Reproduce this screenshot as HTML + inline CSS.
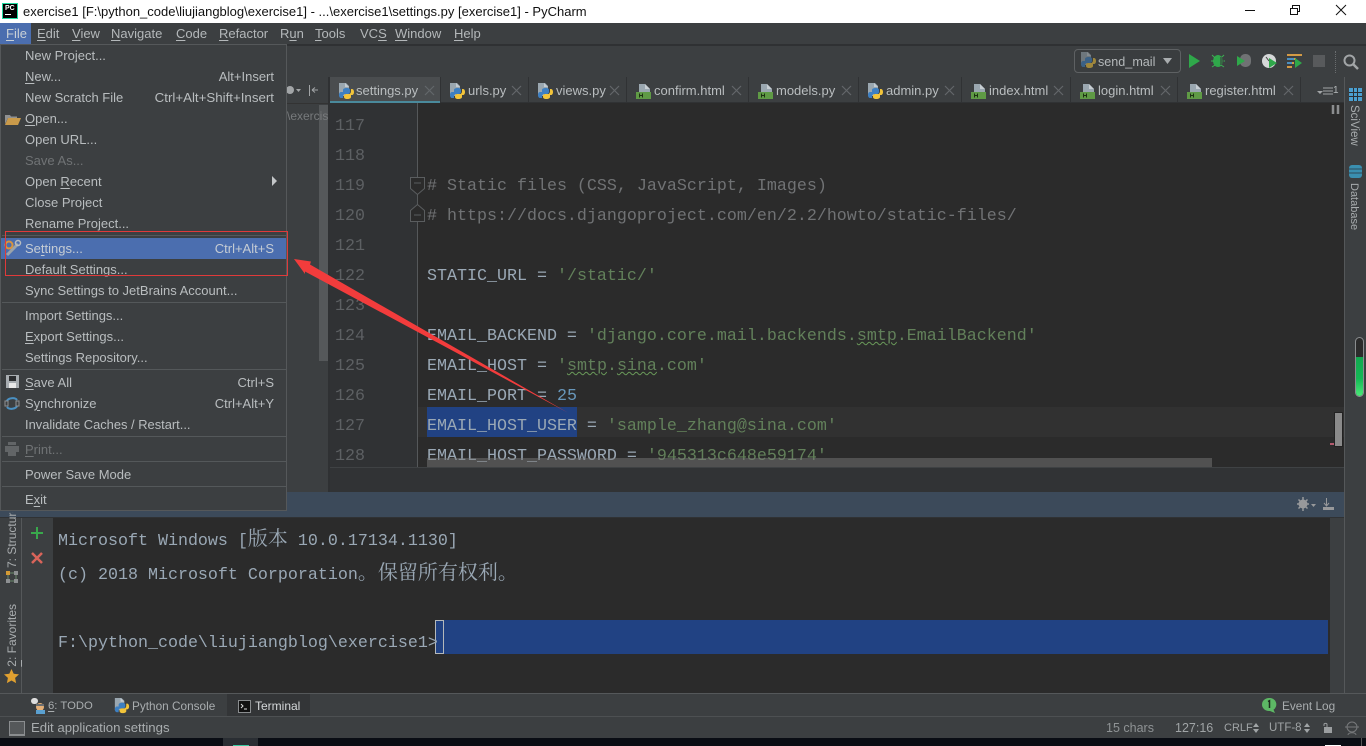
<!DOCTYPE html>
<html><head><meta charset="utf-8"><title>exercise1 - PyCharm</title>
<style>
html,body{margin:0;padding:0;width:1366px;height:746px;overflow:hidden;background:#3c3f41}
body{position:relative;font-family:"Liberation Sans","Noto Sans CJK SC",sans-serif;font-size:13px;color:#b4b8ba}
.a{position:absolute}
.t{position:absolute;white-space:pre;line-height:20px}
.c{position:absolute;white-space:pre;font-family:"Liberation Mono","Noto Serif CJK SC",monospace;font-size:16.67px;line-height:30px;color:#9aa8b5}
.z{font-family:"Noto Serif CJK SC",serif;font-size:20px;line-height:0}
.n{position:absolute;left:335px;font-family:"Liberation Mono",monospace;font-size:16.67px;line-height:30px;color:#5d6063}
.s{color:#62805a}.w{text-decoration:underline wavy #6a9a5a 1px}
.m{position:absolute;left:25px;white-space:pre;line-height:20px;color:#b9bdbf}
.k{position:absolute;right:1092px;white-space:pre;line-height:20px;color:#b9bdbf}
.sep{position:absolute;left:2px;width:284px;height:1px;background:#54585a}
.tab{position:absolute;top:77px;height:26px;border-right:1px solid #303234}
.tab span{position:absolute;top:4px;white-space:pre;line-height:20px;color:#b9bdbf}
.x{position:absolute;top:9px;width:9px;height:9px}
.v{position:absolute;writing-mode:vertical-rl;white-space:pre;line-height:14px;font-size:12px;color:#a9adaf}
.v.r{transform:rotate(180deg)}
u{text-underline-offset:2px}
svg{position:absolute;overflow:visible}
</style></head><body>
<svg width="0" height="0" style="position:absolute"><defs>
<g id="py"><path d="M3 1h7l3 3v5H9v5H3z" fill="#9aa7b0"/><path d="M9 1v4h4" fill="#c3ccd2"/><path d="M11 6c-3 0-4 1-4 2v2H5c-1 0-2 1-2 3s1 3 2 3h2v-2c0-1 1-2 2-2h3c1 0 2-1 2-2V8c0-1-1-2-3-2z" fill="#3d7fc1"/><path d="M11 17c3 0 4-1 4-2v-2h1c1 0 2-1 2-3s-1-3-2-3h-1v2c0 2-1 3-2 3h-3c-1 0-2 1-2 2v1c0 1 1 2 3 2z" fill="#f2c43a"/></g>
<g id="ht"><path d="M3 1h6l5 5v4H3z" fill="#9aa7b0"/><path d="M9 1v5h5" fill="#c7ced3"/><rect x="0" y="9" width="15" height="7" fill="#5f9a45"/><path d="M3.500 10.500v4M6.500 10.500v4M3.500 12.500h3" stroke="#1d3212" fill="none"/></g>
<g id="cl"><path d="M0 0L9 9M9 0L0 9" stroke="#63676a" stroke-width="1.200"/></g>
</defs></svg>

<!-- title bar -->
<div class="a" style="left:0;top:0;width:1366px;height:23px;background:#fff"></div>
<div class="a" style="left:2px;top:3px;width:14px;height:14px;background:#000;border:1px solid #1fd9a0"></div>
<div class="a" style="left:5px;top:4px;font:bold 7px/9px 'Liberation Sans',sans-serif;color:#fff">PC</div>
<div class="a" style="left:5px;top:14px;width:6px;height:1px;background:#fff"></div>
<div class="t" style="left:23px;top:2px;color:#111;font-size:13px">exercise1 [F:\python_code\liujiangblog\exercise1] - ...\exercise1\settings.py [exercise1] - PyCharm</div>
<svg style="left:1240px;top:0" width="120" height="22"><path d="M5 10.500h10" stroke="#111"/><path d="M50.500 8.500h7v6h-7zM52.500 8V5.500h7v6H58" stroke="#111" fill="none"/><path d="M96 5l10 10M106 5L96 15" stroke="#111" fill="none"/></svg>

<!-- menu bar -->
<div class="a" style="left:0;top:23px;width:1366px;height:22px;background:#3c3f41"></div>
<div class="a" style="left:0;top:23px;width:31px;height:22px;background:#4b6eaf"></div>
<div class="t" style="left:6px;top:24px;color:#c9d0d6"><u>F</u>ile</div>
<div class="t" style="left:37px;top:24px"><u>E</u>dit</div>
<div class="t" style="left:72px;top:24px"><u>V</u>iew</div>
<div class="t" style="left:111px;top:24px"><u>N</u>avigate</div>
<div class="t" style="left:176px;top:24px"><u>C</u>ode</div>
<div class="t" style="left:219px;top:24px"><u>R</u>efactor</div>
<div class="t" style="left:280px;top:24px">R<u>u</u>n</div>
<div class="t" style="left:315px;top:24px"><u>T</u>ools</div>
<div class="t" style="left:360px;top:24px">VC<u>S</u></div>
<div class="t" style="left:395px;top:24px"><u>W</u>indow</div>
<div class="t" style="left:454px;top:24px"><u>H</u>elp</div>
<div class="a" style="left:0;top:44px;width:1366px;height:2px;background:#2f3133"></div>

<!-- toolbar -->
<div class="a" style="left:1074px;top:49px;width:105px;height:22px;background:#3a3d3f;border:1px solid #5e6163;border-radius:4px"></div>
<svg style="left:1080px;top:53px;opacity:.55" width="15" height="15"><use href="#py" transform="translate(-2 -2)"/></svg>
<div class="t" style="left:1098px;top:52px;font-size:12.600px">send_mail</div>
<svg style="left:1163px;top:58px" width="10" height="7"><path d="M0 0h9L4.500 6z" fill="#a9adaf"/></svg>
<svg style="left:1188px;top:53px" width="14" height="16"><path d="M1 1l11 7-11 7z" fill="#2fa84a"/></svg>
<svg style="left:1211px;top:53px" width="16" height="16"><ellipse cx="7" cy="8" rx="5" ry="6" fill="#2fa84a"/><path d="M1 2l3 3M13 2l-3 3M0 8h3M14 8h-3M1 14l3-2M13 14l-3-2" stroke="#3cb054"/><path d="M9 4h4v8H9z" fill="#3c3f41" opacity=".6"/></svg>
<svg style="left:1237px;top:53px" width="15" height="16"><rect x="3" y="1" width="11" height="13" rx="5" fill="#9a9d9f" opacity=".55"/><path d="M0 3l8 5-8 5z" fill="#2fa84a"/></svg>
<svg style="left:1262px;top:53px" width="16" height="16"><circle cx="7" cy="8" r="7" fill="#d5d7d8"/><path d="M7 8L4 4" stroke="#444"/><path d="M7 5l8 5-8 5z" fill="#2fa84a"/></svg>
<svg style="left:1287px;top:54px" width="16" height="14"><path d="M0 1h15M0 5h9M0 9h7M0 13h5" stroke="#d39a45" stroke-width="2"/><path d="M0 5h7M0 9h5" stroke="#4a90c2" stroke-width="2"/><path d="M8 4l7 5-7 5z" fill="#2fa84a"/></svg>
<div class="a" style="left:1313px;top:55px;width:12px;height:12px;background:#585a5c"></div>
<div class="a" style="left:1335px;top:51px;width:1px;height:22px;border-left:1px dotted #6a6d6f"></div>
<svg style="left:1343px;top:54px" width="16" height="16"><circle cx="6.500" cy="6.500" r="5" stroke="#a2a5a7" stroke-width="2" fill="none"/><path d="M10 10l5 5" stroke="#a2a5a7" stroke-width="2.500"/></svg>

<!-- project panel remnants -->
<div class="a" style="left:287px;top:77px;width:42px;height:390px;background:#3c3f41"></div>
<div class="a" style="left:287px;top:103px;width:42px;height:1px;background:#333"></div>
<svg style="left:288px;top:84px" width="32" height="14"><circle cx="2" cy="6" r="4" fill="#a2a5a7"/><path d="M8 5h5l-2.500 3z" fill="#a2a5a7"/><path d="M21.500 1v11M24 6h6M24 6l3-2.500M24 6l3 2.500" stroke="#a2a5a7" fill="none"/></svg>
<div class="a" style="left:319px;top:105px;width:9px;height:256px;background:#55585a"></div>
<div class="t" style="left:287px;top:106px;width:41px;overflow:hidden;color:#777a7c;font-size:12px">\exercis</div>
<div class="a" style="left:328px;top:77px;width:2px;height:415px;background:#2f3133"></div>

<!-- tabs -->
<div class="a" style="left:330px;top:77px;width:1014px;height:26px;background:#3c3f41"></div>
<div class="a" style="left:330px;top:77px;width:110px;height:24px;background:#4a4d4f"></div>
<div class="a" style="left:330px;top:101px;width:110px;height:2px;background:#4a8a9c"></div>
<div class="a" style="left:440px;top:102px;width:904px;height:1px;background:#303234"></div>
<div class="tab" style="left:330px;width:110px"><svg style="left:6px;top:5px" width="18" height="18"><use href="#py"/></svg><span style="left:26px">settings.py</span><svg class="x" style="left:95px"><use href="#cl"/></svg></div>
<div class="tab" style="left:441px;width:87px"><svg style="left:6px;top:5px" width="18" height="18"><use href="#py"/></svg><span style="left:27px">urls.py</span><svg class="x" style="left:71px"><use href="#cl"/></svg></div>
<div class="tab" style="left:529px;width:97px"><svg style="left:6px;top:5px" width="18" height="18"><use href="#py"/></svg><span style="left:27px">views.py</span><svg class="x" style="left:81px"><use href="#cl"/></svg></div>
<div class="tab" style="left:627px;width:121px"><svg style="left:9px;top:6px" width="16" height="17"><use href="#ht"/></svg><span style="left:27px">confirm.html</span><svg class="x" style="left:105px"><use href="#cl"/></svg></div>
<div class="tab" style="left:749px;width:109px"><svg style="left:9px;top:6px" width="16" height="17"><use href="#ht"/></svg><span style="left:27px">models.py</span><svg class="x" style="left:93px"><use href="#cl"/></svg></div>
<div class="tab" style="left:859px;width:102px"><svg style="left:6px;top:5px" width="18" height="18"><use href="#py"/></svg><span style="left:27px">admin.py</span><svg class="x" style="left:86px"><use href="#cl"/></svg></div>
<div class="tab" style="left:962px;width:108px"><svg style="left:9px;top:6px" width="16" height="17"><use href="#ht"/></svg><span style="left:27px">index.html</span><svg class="x" style="left:92px"><use href="#cl"/></svg></div>
<div class="tab" style="left:1071px;width:106px"><svg style="left:9px;top:6px" width="16" height="17"><use href="#ht"/></svg><span style="left:27px">login.html</span><svg class="x" style="left:90px"><use href="#cl"/></svg></div>
<div class="tab" style="left:1178px;width:122px"><svg style="left:9px;top:6px" width="16" height="17"><use href="#ht"/></svg><span style="left:27px">register.html</span><svg class="x" style="left:106px"><use href="#cl"/></svg></div>
<svg style="left:1317px;top:86px" width="24" height="11"><path d="M0 5h6L3 8z" fill="#a2a5a7"/><path d="M6 2h10M6 5h10M6 8h10" stroke="#a2a5a7"/></svg>
<div class="t" style="left:1333px;top:81px;font-size:10px">1</div>

<!-- editor -->
<div class="a" style="left:330px;top:103px;width:1014px;height:364px;background:#2b2b2b"></div>
<div class="a" style="left:330px;top:103px;width:87px;height:364px;background:#303234"></div>
<div class="a" style="left:418px;top:407px;width:926px;height:30px;background:#313131"></div>
<div class="a" style="left:417px;top:103px;width:1px;height:364px;background:#55585a"></div>
<div class="a" style="left:427px;top:407px;width:150px;height:30px;background:#214283"></div>
<div class="a" style="left:330px;top:103px;width:1014px;height:364px;overflow:hidden">
<div class="n" style="left:5px;top:9px">117</div>
<div class="n" style="left:5px;top:39px">118</div>
<div class="n" style="left:5px;top:69px">119</div>
<div class="n" style="left:5px;top:99px">120</div>
<div class="n" style="left:5px;top:129px">121</div>
<div class="n" style="left:5px;top:159px">122</div>
<div class="n" style="left:5px;top:189px">123</div>
<div class="n" style="left:5px;top:219px">124</div>
<div class="n" style="left:5px;top:249px">125</div>
<div class="n" style="left:5px;top:279px">126</div>
<div class="n" style="left:5px;top:309px">127</div>
<div class="n" style="left:5px;top:339px">128</div>
<div class="c" style="left:97px;top:69px;color:#707274"># Static files (CSS, JavaScript, Images)</div>
<div class="c" style="left:97px;top:99px;color:#707274"># https://docs.djangoproject.com/en/2.2/howto/static-files/</div>
<div class="c" style="left:97px;top:159px">STATIC_URL = <span class="s">'/static/'</span></div>
<div class="c" style="left:97px;top:219px">EMAIL_BACKEND = <span class="s">'django.core.mail.backends.<span class="w">smtp</span>.EmailBackend'</span></div>
<div class="c" style="left:97px;top:249px">EMAIL_HOST = <span class="s">'<span class="w">smtp</span>.<span class="w">sina</span>.com'</span></div>
<div class="c" style="left:97px;top:279px">EMAIL_PORT = <span style="color:#6897bb">25</span></div>
<div class="c" style="left:97px;top:309px">EMAIL_HOST_USER = <span class="s">'sample_zhang@sina.com'</span></div>
<div class="c" style="left:97px;top:339px">EMAIL_HOST_PASSWORD = <span class="s">'945313c648e59174'</span></div>
</div>
<svg style="left:409px;top:176px" width="18" height="48"><path d="M1.500 1.500h14v11l-7 6-7-6z" fill="#2b2b2b" stroke="#5a5d5f"/><path d="M5 7h7" stroke="#5a5d5f"/><path d="M1.500 45.500h14v-11l-7-6-7 6z" fill="#2b2b2b" stroke="#5a5d5f"/><path d="M5 39h7" stroke="#5a5d5f"/></svg>
<div class="a" style="left:427px;top:458px;width:785px;height:9px;background:rgba(120,120,120,.5)"></div>
<svg style="left:1332px;top:104px" width="10" height="11"><path d="M1 1v9M6 1v9" stroke="#8b8d8f" stroke-width="2.500"/></svg>
<div class="a" style="left:1334px;top:412px;width:9px;height:35px;background:#8a8a8a;border:1px solid #222;box-sizing:border-box"></div>
<div class="a" style="left:1330px;top:443px;width:4px;height:2px;background:#b45a6e"></div>

<!-- panel between -->
<div class="a" style="left:330px;top:467px;width:1014px;height:25px;background:#313335;border-top:1px solid #3f4244;box-sizing:border-box"></div>

<!-- terminal header -->
<div class="a" style="left:0;top:492px;width:1344px;height:25px;background:#3c4a5a"></div>
<div class="a" style="left:0;top:517px;width:1344px;height:1px;background:#303234"></div>
<svg style="left:1297px;top:497px" width="42" height="15"><circle cx="6" cy="7" r="4.500" fill="#98999b"/><circle cx="6" cy="7" r="1.800" fill="#3c4a5a"/><path d="M6 0v14M0 7h12M1.500 2.500l9 9M10.500 2.500l-9 9" stroke="#98999b" stroke-width="1.500"/><path d="M14 7h5l-2.500 3z" fill="#98999b"/><path d="M29.500 1v7M27 6l2.500 3L32 6" stroke="#98999b" fill="none"/><rect x="26" y="10" width="11" height="3" fill="#98999b"/></svg>

<!-- terminal -->
<div class="a" style="left:0;top:518px;width:22px;height:176px;background:#3c3f41"></div>
<div class="a" style="left:21px;top:518px;width:1px;height:176px;background:#55585a"></div>
<div class="a" style="left:22px;top:518px;width:31px;height:176px;background:#3c3f41"></div>
<div class="a" style="left:53px;top:518px;width:1277px;height:175px;background:#2b2b2b"></div>
<div class="a" style="left:1330px;top:518px;width:14px;height:175px;background:#3c3f41"></div>
<svg style="left:30px;top:526px" width="16" height="40"><path d="M7 1v12M1 7h12" stroke="#39a84c" stroke-width="2"/><path d="M2 27l10 10M12 27L2 37" stroke="#d9645a" stroke-width="2.500"/></svg>
<div class="a" style="left:435px;top:620px;width:893px;height:34px;background:#214283"></div>
<div class="a" style="left:435px;top:620px;width:9px;height:34px;box-sizing:border-box;border:1px solid #b4b8ba"></div>
<div class="c" style="left:58px;top:527px">Microsoft Windows [<span class="z">版本</span> 10.0.17134.1130]</div>
<div class="c" style="left:58px;top:561px">(c) 2018 Microsoft Corporation<span class="z">。保留所有权利。</span></div>
<div class="c" style="left:58px;top:629px">F:\python_code\liujiangblog\exercise1&gt;</div>

<!-- left stripe labels -->
<div class="v r" style="left:5px;top:512px;height:56px;overflow:hidden"><u>7</u>: Structure</div>
<svg style="left:6px;top:571px" width="12" height="12"><path d="M0 0h4v4H0z" fill="#d39a35"/><path d="M8 0h4v4H8zM0 8h4v4H0zM8 8h4v4H8z" fill="#8d9092"/><path d="M4 2h4M4 10h4M2 4v4M10 4v4" stroke="#6a8a6a"/></svg>
<div class="v r" style="left:5px;top:604px"><u>2</u>: Favorites</div>
<svg style="left:4px;top:669px" width="15" height="15"><path d="M7.500 0l2.200 4.800 5.300.6-3.900 3.500 1 5.200-4.600-2.600-4.600 2.600 1-5.200L0 5.400l5.300-.6z" fill="#e0a030"/></svg>

<!-- right stripe -->
<div class="a" style="left:1344px;top:77px;width:22px;height:640px;background:#3c3f41;border-left:1px solid #55585a;box-sizing:border-box"></div>
<svg style="left:1349px;top:88px" width="13" height="13"><rect width="13" height="13" fill="#4a9fd0"/><path d="M0 4.500h13M0 8.500h13M4.500 0v13M8.500 0v13" stroke="#2b2f33"/></svg>
<div class="v" style="left:1347px;top:105px;font-size:11.500px">SciView</div>
<svg style="left:1349px;top:165px" width="13" height="13"><rect width="13" height="13" rx="3" fill="#3a8fb0"/><path d="M0 4h13M0 8h13" stroke="#2d4a58"/></svg>
<div class="v" style="left:1347px;top:183px;font-size:11px">Database</div>
<div class="a" style="left:1355px;top:337px;width:9px;height:60px;box-sizing:border-box;border:1px solid #8a8d8f;border-radius:5px;background:#2b2b2b;overflow:hidden"><div class="a" style="left:0;top:19px;width:7px;height:39px;background:linear-gradient(#12a850,#14b855 55%,#4be878)"></div></div>

<!-- bottom tabs -->
<div class="a" style="left:0;top:693px;width:1366px;height:1px;background:#55585a"></div>
<div class="a" style="left:0;top:694px;width:1366px;height:22px;background:#3c3f41"></div>
<div class="a" style="left:227px;top:694px;width:83px;height:22px;background:#333537"></div>
<svg style="left:31px;top:698px" width="16" height="16"><circle cx="9" cy="9" r="4" fill="#e5b078"/><path d="M5 12h9v4H5z" fill="#5aa0d0"/><rect x="0" y="0" width="7" height="6" rx="3" fill="#ddd"/><path d="M5 6h8v2H5z" fill="#6a6d6f"/></svg>
<div class="t" style="left:48px;top:696px;font-size:11.300px;color:#a9adaf"><u>6</u>: TODO</div>
<svg style="left:115px;top:698px" width="14" height="16"><use href="#py" transform="translate(-3 -1) scale(.95)"/></svg>
<div class="t" style="left:132px;top:696px;font-size:11.800px;color:#a9adaf">Python Console</div>
<svg style="left:238px;top:700px" width="13" height="13"><rect x=".5" y=".5" width="12" height="12" fill="#111" stroke="#8a8d8f"/><path d="M3 4l2 2-2 2M6 9h3" stroke="#ddd" fill="none"/></svg>
<div class="t" style="left:255px;top:696px;font-size:12px;color:#d5d8da">Terminal</div>
<svg style="left:1262px;top:698px" width="16" height="15"><path d="M7 0a7 6.500 0 1 0 0 13h1l5 2-1.500-3.200A6.500 6.500 0 0 0 7 0z" fill="#5db865"/><path d="M6 3.500l1.500-.8V10" stroke="#1c2d1e" stroke-width="1.500" fill="none"/></svg>
<div class="t" style="left:1282px;top:696px;font-size:11.800px;color:#a9adaf">Event Log</div>

<!-- status bar -->
<div class="a" style="left:0;top:716px;width:1366px;height:1px;background:#4d5052"></div>
<div class="a" style="left:0;top:717px;width:1366px;height:21px;background:#3c3f41"></div>
<div class="a" style="left:9px;top:721px;width:14px;height:12px;background:#55585a;border:1px solid #8a8d8f;border-bottom:2px solid #8a8d8f"></div>
<div class="t" style="left:31px;top:718px;font-size:13.200px;color:#a9adaf">Edit application settings</div>
<div class="t" style="left:1106px;top:718px;font-size:12.500px;color:#8f9395">15 chars</div>
<div class="t" style="left:1175px;top:718px;font-size:12.500px;color:#a0a4a6">127:16</div>
<div class="t" style="left:1224px;top:718px;font-size:11px;color:#a0a4a6">CRLF</div>
<svg style="left:1253px;top:723px" width="7" height="10"><path d="M0 4h6L3 0zM0 6h6L3 10z" fill="#a0a4a6"/></svg>
<div class="t" style="left:1269px;top:718px;font-size:11.500px;color:#a0a4a6">UTF-8</div>
<svg style="left:1304px;top:723px" width="7" height="10"><path d="M0 4h6L3 0zM0 6h6L3 10z" fill="#a0a4a6"/></svg>
<svg style="left:1323px;top:722px" width="10" height="12"><path d="M1 4V2.500C1 1 4 1 4 2.500V5" stroke="#9b9ea0" fill="none"/><rect x="1" y="5" width="8" height="6" fill="#9b9ea0"/></svg>
<svg style="left:1345px;top:721px" width="14" height="15"><circle cx="7" cy="6" r="5" fill="none" stroke="#77797b"/><path d="M0 6h14M3 14c0-3 8-3 8 0" stroke="#77797b" fill="none"/></svg>

<!-- taskbar -->
<div class="a" style="left:0;top:738px;width:1366px;height:8px;background:#0a0d14"></div>
<div class="a" style="left:223px;top:738px;width:35px;height:8px;background:#2a2e33"></div>
<div class="a" style="left:233px;top:745px;width:16px;height:1px;background:#3ac9a0"></div>
<div class="a" style="left:1361px;top:738px;width:1px;height:8px;background:#555"></div>
<div class="a" style="left:1325px;top:745px;width:16px;height:1px;background:#fff"></div>

<!-- file menu -->
<div class="a" style="left:0;top:44px;width:287px;height:467px;background:#3c3f41;border:1px solid #55585a;box-sizing:border-box"></div>
<div class="a" style="left:1px;top:238px;width:285px;height:21px;background:#4b6eaf"></div>
<div class="m" style="top:46px">New Project...</div>
<div class="m" style="top:67px"><u>N</u>ew...</div><div class="k" style="top:67px">Alt+Insert</div>
<div class="m" style="top:88px">New Scratch File</div><div class="k" style="top:88px;font-size:13.300px">Ctrl+Alt+Shift+Insert</div>
<svg style="left:5px;top:113px" width="16" height="12"><path d="M0 2h5l1 1.500h6V5H3L0 11z" fill="#8f9192"/><path d="M3 5h13l-3 7H0z" fill="#c99a4a"/></svg>
<div class="m" style="top:109px"><u>O</u>pen...</div>
<div class="m" style="top:130px">Open URL...</div>
<div class="m" style="top:151px;color:#707375">Save As...</div>
<div class="m" style="top:172px">Open <u>R</u>ecent</div>
<svg style="left:272px;top:176px" width="6" height="10"><path d="M0 0l5 5-5 5z" fill="#c3c6c8"/></svg>
<div class="m" style="top:193px">Close Project</div>
<div class="m" style="top:214px">Rename Project...</div>
<div class="sep" style="top:235px"></div>
<svg style="left:4px;top:240px" width="17" height="17"><path d="M3 15L14 4" stroke="#9aa3aa" stroke-width="3"/><circle cx="5" cy="5" r="3.500" fill="none" stroke="#d8953f" stroke-width="2"/><circle cx="14" cy="3" r="2.500" fill="none" stroke="#b9bdbf" stroke-width="1.500"/></svg>
<div class="m" style="top:239px;color:#c5ccd4">Se<u>t</u>tings...</div><div class="k" style="top:239px;color:#c5ccd4">Ctrl+Alt+S</div>
<div class="m" style="top:260px">Default Settings...</div>
<div class="m" style="top:281px">Sync Settings to JetBrains Account...</div>
<div class="sep" style="top:302px"></div>
<div class="m" style="top:306px">Import Settings...</div>
<div class="m" style="top:327px"><u>E</u>xport Settings...</div>
<div class="m" style="top:348px">Settings Repository...</div>
<div class="sep" style="top:369px"></div>
<svg style="left:6px;top:375px" width="13" height="13"><rect width="13" height="13" fill="#a8adb1"/><rect x="3" y="1" width="7" height="5" fill="#2b2d2f"/><rect x="3" y="8" width="7" height="5" fill="#e8e8e8"/></svg>
<div class="m" style="top:373px"><u>S</u>ave All</div><div class="k" style="top:373px">Ctrl+S</div>
<svg style="left:5px;top:396px" width="14" height="15"><path d="M2 5c1-3 8-4 10-1M12 10c-1 3-8 4-10 1" stroke="#4a90c2" stroke-width="2" fill="none"/><rect x="0" y="5" width="3" height="5" fill="none" stroke="#8f9192"/><rect x="11" y="5" width="3" height="5" fill="none" stroke="#8f9192"/></svg>
<div class="m" style="top:394px">S<u>y</u>nchronize</div><div class="k" style="top:394px">Ctrl+Alt+Y</div>
<div class="m" style="top:415px;font-size:12.900px">Invalidate Caches / Restart...</div>
<div class="sep" style="top:436px"></div>
<svg style="left:5px;top:442px" width="14" height="14"><path d="M3 0h8v3H3zM0 4h14v6H0zM3 8h8v6H3z" fill="#626567"/></svg>
<div class="m" style="top:440px;color:#707375"><u>P</u>rint...</div>
<div class="sep" style="top:461px"></div>
<div class="m" style="top:465px">Power Save Mode</div>
<div class="sep" style="top:486px"></div>
<div class="m" style="top:490px">E<u>x</u>it</div>

<!-- annotations -->
<svg style="left:0;top:0" width="1366" height="746">
<rect x="5.500" y="231.500" width="282" height="44" fill="none" stroke="#e03a3a"/>
<path d="M294 259L311 261.500L310 264.500L568 412.700L305 271.500L305 274z" fill="#f23c3c"/>
</svg>
</body></html>
